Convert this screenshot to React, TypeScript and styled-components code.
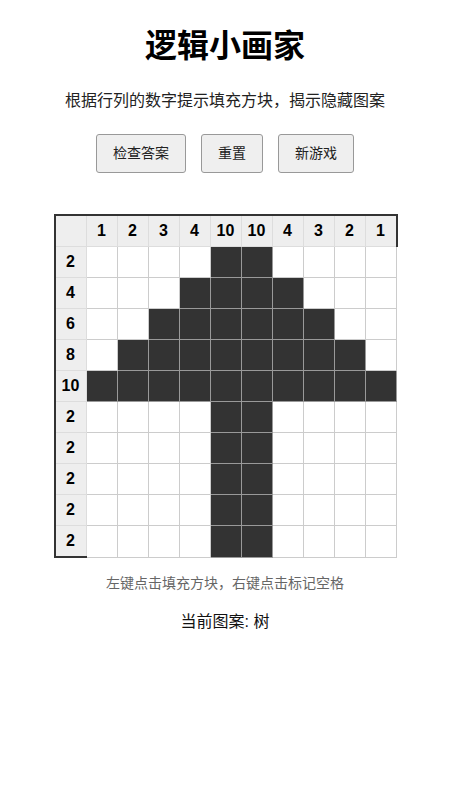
import React from "react";
import styled, { createGlobalStyle } from "styled-components";

const GlobalStyle = createGlobalStyle`
  body {
    margin: 0;
    background: #fff;
    font-family: "Liberation Sans", "Noto Sans CJK SC", sans-serif;
    color: #000;
  }
`;

const Page = styled.div`
  display: flex;
  flex-direction: column;
  align-items: center;
  padding-top: 24px;
`;

const Title = styled.h1`
  margin: 0;
  font-size: 32px;
  line-height: 44px;
  font-weight: 700;
`;

const Subtitle = styled.p`
  margin: 22px 0 0;
  font-size: 16px;
  line-height: 22px;
  color: #222;
`;

const Toolbar = styled.div`
  display: flex;
  gap: 15px;
  margin-top: 22px;
`;

const Button = styled.button`
  font-family: inherit;
  font-size: 14px;
  line-height: 19px;
  padding: 9px 16px;
  color: #222;
  background: #efefef;
  border: 1px solid #999;
  border-radius: 3px;
  cursor: pointer;
`;

const Board = styled.table`
  margin: 41px 0 0 1px;
  border-collapse: collapse;
`;

const Corner = styled.td`
  width: 30px;
  height: 30px;
  padding: 0;
  background: #eee;
  border: 1px solid #ddd;
  border-top: 2px solid #333;
  border-left: 2px solid #333;
`;

const ColClue = styled.td<{ $last?: boolean }>`
  width: 30px;
  height: 30px;
  padding: 0;
  text-align: center;
  font-size: 16px;
  font-weight: 700;
  background: #eee;
  border: 1px solid #ddd;
  border-top: 2px solid #333;
  ${({ $last }) => $last && "border-right: 2px solid #333;"}
`;

const RowClue = styled.td<{ $last?: boolean }>`
  width: 30px;
  height: 30px;
  padding: 0;
  text-align: center;
  font-size: 16px;
  font-weight: 700;
  background: #eee;
  border: 1px solid #ddd;
  border-left: 2px solid #333;
  ${({ $last }) => $last && "border-bottom: 2px solid #333;"}
`;

const Cell = styled.td<{ $filled: boolean }>`
  width: 30px;
  height: 30px;
  padding: 0;
  background: ${({ $filled }) => ($filled ? "#333" : "#fff")};
  border: 1px solid ${({ $filled }) => ($filled ? "#999" : "#ccc")};
`;

const Hint = styled.p`
  margin: 15px 0 0;
  font-size: 14px;
  line-height: 20px;
  color: #666;
`;

const Status = styled.p`
  margin: 18px 0 0;
  font-size: 16px;
  line-height: 22px;
  color: #111;
`;

const spans: [number, number][] = [
  [4, 5],
  [3, 6],
  [2, 7],
  [1, 8],
  [0, 9],
  [4, 5],
  [4, 5],
  [4, 5],
  [4, 5],
  [4, 5],
];

const colClues = [1, 2, 3, 4, 10, 10, 4, 3, 2, 1];

const App: React.FC = () => {
  return (
    <Page>
      <GlobalStyle />
      <Title>逻辑小画家</Title>
      <Subtitle>根据行列的数字提示填充方块，揭示隐藏图案</Subtitle>
      <Toolbar>
        <Button>检查答案</Button>
        <Button>重置</Button>
        <Button>新游戏</Button>
      </Toolbar>
      <Board>
        <tbody>
          <tr>
            <Corner />
            {colClues.map((c, i) => (
              <ColClue key={i} $last={i === colClues.length - 1}>
                {c}
              </ColClue>
            ))}
          </tr>
          {spans.map(([a, b], r) => (
            <tr key={r}>
              <RowClue $last={r === spans.length - 1}>{b - a + 1}</RowClue>
              {Array.from({ length: 10 }, (_, c) => (
                <Cell key={c} $filled={c >= a && c <= b} />
              ))}
            </tr>
          ))}
        </tbody>
      </Board>
      <Hint>左键点击填充方块，右键点击标记空格</Hint>
      <Status>当前图案: 树</Status>
    </Page>
  );
};

export default App;
